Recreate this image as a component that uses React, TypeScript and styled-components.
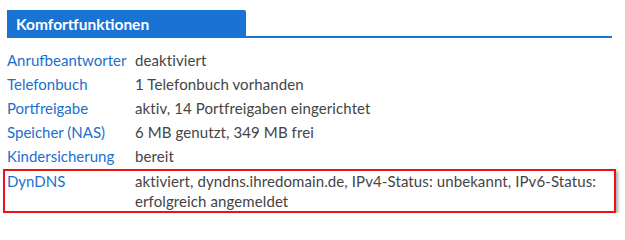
import React from 'react';
import styled, { createGlobalStyle } from 'styled-components';

interface Feature {
  label: string;
  value: string;
  highlighted?: boolean;
}

const features: Feature[] = [
  { label: 'Anrufbeantworter', value: 'deaktiviert' },
  { label: 'Telefonbuch', value: '1 Telefonbuch vorhanden' },
  { label: 'Portfreigabe', value: 'aktiv, 14 Portfreigaben eingerichtet' },
  { label: 'Speicher (NAS)', value: '6 MB genutzt, 349 MB frei' },
  { label: 'Kindersicherung', value: 'bereit' },
  {
    label: 'DynDNS',
    value: 'aktiviert, dyndns.ihredomain.de, IPv4-Status: unbekannt, IPv6-Status: erfolgreich angemeldet',
    highlighted: true,
  },
];

const GlobalStyle = createGlobalStyle`
  html, body {
    margin: 0;
    padding: 0;
    background: #ffffff;
  }
  body {
    font-family: Lato, "Liberation Sans", sans-serif;
  }
`;

const Panel = styled.section`
  width: 605px;
  padding: 10px 0 0 7px;
`;

const TitleBar = styled.div`
  display: flex;
  border-bottom: 2px solid #1873d3;
`;

const TitleTab = styled.h2`
  margin: 0;
  width: 239px;
  height: 26px;
  box-sizing: border-box;
  padding: 4px 0 0 9px;
  background: #1873d3;
  border-top-right-radius: 2px;
  color: #ffffff;
  font-size: 15.5px;
  font-weight: 700;
  line-height: 20px;
`;

const List = styled.div`
  margin-top: 10px;
  display: flex;
  flex-direction: column;
`;

const Row = styled.div<{ $highlighted?: boolean }>`
  display: grid;
  grid-template-columns: 128px 1fr;
  font-size: 15px;
  line-height: 20px;
  padding: ${(p) => (p.$highlighted ? '0 2px' : '2px 0')};
  margin: ${(p) => (p.$highlighted ? '1px -4px 0 -4px' : '0')};
  border: ${(p) => (p.$highlighted ? '2px solid #ee1111' : 'none')};
  box-shadow: ${(p) => (p.$highlighted ? '2px 2px 3px rgba(0, 0, 0, 0.35)' : 'none')};
`;

const Label = styled.span`
  color: #1b6fce;
`;

const Value = styled.span`
  color: #444444;
  letter-spacing: 0.1px;
`;

export default function App(): React.ReactElement {
  return (
    <>
      <GlobalStyle />
      <Panel>
        <TitleBar>
          <TitleTab>Komfortfunktionen</TitleTab>
        </TitleBar>
        <List>
          {features.map((f) => (
            <Row key={f.label} $highlighted={f.highlighted}>
              <Label>{f.label}</Label>
              <Value>{f.value}</Value>
            </Row>
          ))}
        </List>
      </Panel>
    </>
  );
}
